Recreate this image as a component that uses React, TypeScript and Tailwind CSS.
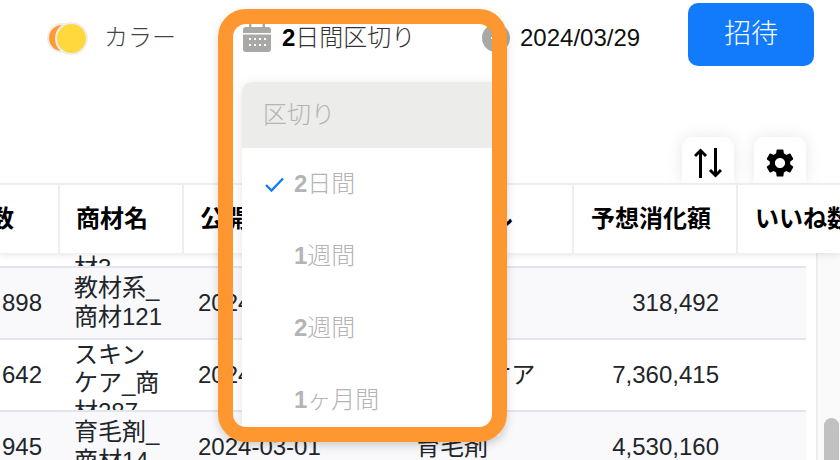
import { MdSettings } from "react-icons/md";

const rows = [
  { n: "1,204", name: "スキンケア_商材3", date: "2024-03-01", genre: "スキンケア", amount: "1,204,880", bg: "bg-white" },
  { n: "898", name: "教材系_商材121", date: "2024-03-01", genre: "教材系", amount: "318,492", bg: "bg-[#f9f9fb]" },
  { n: "642", name: "スキンケア_商材287", date: "2024-03-01", genre: "スキンケア", amount: "7,360,415", bg: "bg-white" },
  { n: "945", name: "育毛剤_商材14", date: "2024-03-01", genre: "育毛剤", amount: "4,530,160", bg: "bg-[#f9f9fb]" },
];

function CalendarIcon() {
  return (
    <svg width="28" height="28" viewBox="0 0 28 28" className="shrink-0">
      <path fill="#a8a8a6" d="M6 0h2.4v3H19.600V0H22v3h3a3 3 0 0 1 3 3v3H0V6a3 3 0 0 1 3-3h3zM0 10.500h28V25a3 3 0 0 1-3 3H3a3 3 0 0 1-3-3z" />
      <g fill="#fff">
        <rect x="6" y="14" width="2" height="2" />
        <rect x="11" y="14" width="2" height="2" />
        <rect x="16" y="14" width="2" height="2" />
        <rect x="21" y="14" width="2" height="2" />
        <rect x="6" y="20" width="2" height="2" />
        <rect x="11" y="20" width="2" height="2" />
        <rect x="16" y="20" width="2" height="2" />
        <rect x="21" y="20" width="2" height="2" />
      </g>
    </svg>
  );
}

function SortIcon() {
  return (
    <svg width="28" height="30" viewBox="0 0 28 30" fill="none" stroke="#000" strokeWidth="3">
      <path d="M6.500 30V2M1 8 6.500 2.500 12 8" />
      <path d="M21.500 0v28M16 22l5.500 5.500L27 22" />
    </svg>
  );
}

export default function App() {
  return (
    <div className="relative h-[460px] w-[840px] overflow-hidden bg-white text-[24px] text-black [font-family:'Liberation_Sans','Noto_Sans_CJK_JP',sans-serif]">
      {/* top bar */}
      <div className="flex h-[76px] items-center pl-[47px]">
        <div className="flex w-[41px] items-center">
          <span className="h-[30px] w-[30px] shrink-0 rounded-full border-2 border-[#eeeeee] bg-[#ff9a33]" />
          <span className="-ml-[22px] h-[33px] w-[33px] shrink-0 rounded-full border-2 border-[#eeeeee] bg-[#ffd83d]" />
        </div>
        <span className="ml-[16px] font-light text-[#444]">カラー</span>
        <div className="ml-[67px] flex w-[239px] items-center gap-[11px]">
          <CalendarIcon />
          <span className="whitespace-nowrap font-light text-[#333]"><span className="font-bold text-black">2</span>日間区切り</span>
        </div>
        <div className="flex h-[28px] w-[28px] items-center justify-center rounded-full bg-[#a8a8a6]">
          <span className="h-[2px] w-[10px] bg-white" />
        </div>
        <span className="ml-[10px] text-[#111]">2024/03/29</span>
        <button className="ml-[48px] -mt-[7px] flex h-[63px] w-[126px] items-center justify-center rounded-[10px] bg-[#117bfc] text-[27px] font-light text-white">招待</button>
      </div>

      {/* toolbar */}
      <div className="flex h-[107px] items-end justify-end gap-[20px] pr-[34px]">
        <button className="flex h-[46px] w-[52px] items-start justify-center rounded-t-[10px] bg-white pt-[11px] shadow-[0_0_16px_rgba(0,0,0,0.1)]"><SortIcon /></button>
        <button className="flex h-[46px] w-[52px] items-start justify-center rounded-t-[10px] bg-white pt-[9px] shadow-[0_0_16px_rgba(0,0,0,0.1)]"><MdSettings size={34} color="#000" /></button>
      </div>

      {/* table header */}
      <div className="relative z-10 flex h-[70px] border-t-2 border-[#eeeeee] bg-white font-bold shadow-[0_3px_6px_rgba(0,0,0,0.08)]">
        <div className="flex w-[60px] shrink-0 items-center justify-end overflow-hidden border-r-2 border-[#eeeeee] pr-[44px] whitespace-nowrap"><span className="shrink-0">再生数</span></div>
        <div className="flex w-[124px] shrink-0 items-center border-r-2 border-[#eeeeee] pl-[16px]">商材名</div>
        <div className="flex w-[220px] shrink-0 items-center border-r-2 border-[#eeeeee] pl-[16px]">公開日</div>
        <div className="flex w-[170px] shrink-0 items-center border-r-2 border-[#eeeeee] pl-[14px]">ジャンル</div>
        <div className="flex w-[164px] shrink-0 items-center border-r-2 border-[#eeeeee] pl-[17px]">予想消化額</div>
        <div className="flex flex-1 items-center overflow-hidden pl-[17px] whitespace-nowrap">いいね数</div>
      </div>

      {/* table body */}
      <div className="flex h-[207px] overflow-hidden">
        <div className="-mt-[59px] w-[806px] shrink-0 text-[#212529]">
          {rows.map((r, i) => (
            <div key={i} className={`flex h-[72px] border-t-2 border-[#e1e5ee] ${r.bg}`}>
              <div className="flex w-[60px] shrink-0 items-center justify-end pr-[18px]">{r.n}</div>
              <div className="flex w-[124px] shrink-0 items-center pl-[14px]">
                <div className="max-h-[69px] w-[92px] overflow-hidden leading-[28.8px]">{r.name}</div>
              </div>
              <div className="flex w-[220px] shrink-0 items-center pl-[14px]">{r.date}</div>
              <div className="flex w-[170px] shrink-0 items-center pl-[12px]">{r.genre}</div>
              <div className="flex w-[164px] shrink-0 items-center justify-end pr-[19px]">{r.amount}</div>
            </div>
          ))}
        </div>
        <div className="ml-[10px] flex-1 border-l-2 border-[#eeeeee] bg-[#fafafa] pl-[6px] pt-[165px]">
          <div className="h-[60px] w-[15px] rounded-full bg-[#c1c1c1]" />
        </div>
      </div>

      {/* dropdown menu */}
      <div className="absolute left-[242px] top-[82px] z-20 w-[258px] rounded-t-[10px] bg-white text-[#b4b4b4] shadow-[0_2px_12px_rgba(0,0,0,0.1)]">
        <div className="flex h-[66px] items-center rounded-t-[10px] bg-[#ececeb] pl-[21px] font-light">区切り</div>
        <ul className="font-light">
          <li className="flex h-[72px] items-center pl-[23px]">
            <svg width="19" height="15" viewBox="0 0 19 15" fill="none" stroke="#117bfc" strokeWidth="2.400" className="mr-[10px]"><path d="M1 8l5.500 5.500L18 1.500" /></svg>
            <span><span className="font-bold">2</span>日間</span>
          </li>
          <li className="flex h-[72px] items-center pl-[52px]"><span><span className="font-bold">1</span>週間</span></li>
          <li className="flex h-[72px] items-center pl-[52px]"><span><span className="font-bold">2</span>週間</span></li>
          <li className="flex h-[72px] items-center pl-[52px]"><span><span className="font-bold">1</span>ヶ月間</span></li>
        </ul>
      </div>

      {/* highlight frame */}
      <div className="pointer-events-none absolute left-[218px] top-[9px] z-30 h-[433px] w-[289px] rounded-[28px] border-[15px] border-[#ff9730] shadow-[0_4px_10px_rgba(0,0,0,0.15)]" />
    </div>
  );
}
